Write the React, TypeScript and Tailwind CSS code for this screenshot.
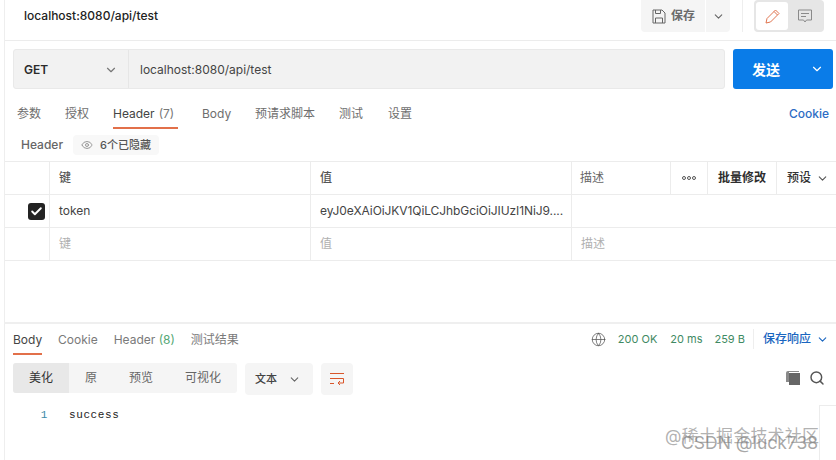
import { ChevronDown, Search, Globe, Eye, Check } from 'lucide-react'
import React from 'react'

const FONT = "font-['Inter','Noto_Sans_CJK_SC',sans-serif]"

const requestTabs = [
  { label: '参数', cls: 'w-[48px]' },
  { label: '授权', cls: 'w-[48px]' },
  { label: 'Header', count: '(7)', active: true, cls: 'w-[89px]' },
  { label: 'Body', cls: 'w-[53px]' },
  { label: '预请求脚本', cls: 'w-[84px]' },
  { label: '测试', cls: 'w-[49px]' },
  { label: '设置', cls: 'w-[48px]' },
]

const App: React.FC = () => {
  return (
    <div className={`${FONT} relative w-[836px] h-[460px] overflow-hidden bg-white text-[13px] text-[#3a3a3a]`}>
      <div className="ml-[4px] h-full border-l border-[#eeeeee] flex flex-col">
        {/* Title bar */}
        <div className="h-[41px] shrink-0 border-b border-[#ececec] flex items-center pl-[19px] pr-[12px]">
          <span className="text-[12px] font-medium text-[#222222] -mt-[9px]">localhost:8080/api/test</span>
          <div className="ml-auto flex items-start self-start h-[32px]">
            <div className="flex items-center gap-[5px] h-[32px] w-[64px] pl-[11px] bg-[#f5f5f5] rounded-bl-[4px] text-[#6b6b6b] font-semibold">
              <svg width="14" height="15" viewBox="0 0 14 15" fill="none" stroke="#666" strokeWidth="1">
                <path d="M1 1h9l3 3v10H1z" />
                <path d="M3.5 1v3.5h5V1M3.5 14V9h7v5" />
              </svg>
              <span className="text-[12px]">保存</span>
            </div>
            <div className="flex items-center justify-center ml-px h-[32px] w-[24px] bg-[#f5f5f5] rounded-br-[4px]">
              <ChevronDown size={13} color="#666" />
            </div>
            <div className="w-px h-[32px] bg-[#eeeeee] ml-[12px]" />
            <div className="ml-[11px] flex items-center h-[32px] w-[70px] bg-[#e6e6e6] rounded-[4px] p-[2px]">
              <div className="w-[32px] h-[28px] bg-white rounded-[3px] flex items-center justify-center">
                <svg width="15" height="15" viewBox="0 0 15 15" fill="none" stroke="#e0744f" strokeWidth="1">
                  <path d="M1 14l1-4.5L10.5 1 14 4.5 5.5 13z" />
                  <path d="M9 2.5L12.5 6" />
                </svg>
              </div>
              <div className="flex-1 flex items-center justify-center">
                <svg width="14" height="15" viewBox="0 0 14 15" fill="none" stroke="#8a8a8a" strokeWidth="1">
                  <path d="M.5 1h13v10H8.5L7 13 5.5 11H.5z" />
                  <path d="M3 4.5h8M3 7.5h5" />
                </svg>
              </div>
            </div>
          </div>
        </div>

        {/* URL bar */}
        <div className="flex h-[40px] mt-[8px] ml-[8px] mr-[2px] shrink-0 gap-[8px]">
          <div className="w-[712px] flex bg-[#f2f2f2] border border-[#e9e9e9] rounded-[3px]">
            <div className="w-[115px] flex items-center pl-[10px] pr-[10px] pt-px border-r border-[#e6e6e6]">
              <span className="text-[12px] font-semibold text-[#2b2b2b]">GET</span>
              <ChevronDown size={14} color="#777" className="ml-auto" />
            </div>
            <div className="flex items-center pl-[11px] pt-px text-[12px] text-[#444444]">localhost:8080/api/test</div>
          </div>
          <div className="w-[100px] flex items-center bg-[#0a7ce8] rounded-[3px] text-white">
            <span className="ml-[19px] text-[14px] font-bold">发送</span>
            <ChevronDown size={14} color="#fff" className="ml-auto mr-[9px]" />
          </div>
        </div>

        {/* Request tabs */}
        <div className="flex items-stretch h-[31px] mt-[9px] ml-[12px] shrink-0 text-[12px] text-[#6e6e6e]">
          {requestTabs.map((t) => (
            <div
              key={t.label}
              className={`${t.cls} flex pt-[7px] ${t.active ? 'text-[#444444]' : ''}`}
            >
              <span className={`h-full ${t.active ? 'border-b-2 border-[#e2704a] pr-[4px]' : ''}`}>
                {t.label}
                {t.count && <span className="text-[#777777] ml-[4px]">{t.count}</span>}
              </span>
            </div>
          ))}
          <span className="ml-auto mr-[7px] pt-[7px] text-[#2c6cc4] font-medium">Cookie</span>
        </div>

        {/* Header label */}
        <div className="flex items-center h-[32px] shrink-0 pl-[16px] text-[12px]">
          <span className="text-[#666666] font-medium">Header</span>
          <div className="ml-[10px] flex items-center gap-[7px] h-[20px] px-[8px] bg-[#f8f8f8] rounded-[4px] text-[#555555] text-[11px] font-medium">
            <Eye size={12} color="#9a9a9a" />
            <span>6个已隐藏</span>
          </div>
        </div>

        {/* Params table */}
        <div className="grid grid-cols-[45px_261px_261px_99px_37px_69px_1fr] grid-rows-[33px_33px_33px] shrink-0 border-t border-[#ececec] text-[12px]">
          <div className="border-r border-b border-[#ececec]" />
          <div className="border-r border-b border-[#ececec] flex items-center pl-[9px] text-[#555555] font-medium">键</div>
          <div className="border-r border-b border-[#ececec] flex items-center pl-[9px] text-[#555555] font-medium">值</div>
          <div className="border-r border-b border-[#ececec] flex items-center pl-[8px] text-[#666666]">描述</div>
          <div className="border-r border-b border-[#ececec] flex items-center justify-center gap-px">
            <span className="w-[4px] h-[4px] rounded-full border border-[#555555]" />
            <span className="w-[4px] h-[4px] rounded-full border border-[#555555]" />
            <span className="w-[4px] h-[4px] rounded-full border border-[#555555]" />
          </div>
          <div className="border-r border-b border-[#ececec] flex items-center justify-center text-[#2e2e2e] font-semibold">批量修改</div>
          <div className="border-b border-[#ececec] flex items-center pl-[10px] text-[#333333] font-medium">
            预设
            <ChevronDown size={13} color="#555" className="ml-[5px]" />
          </div>

          <div className="border-r border-b border-[#ececec] flex items-center justify-end pr-[4px]">
            <span className="w-[17px] h-[17px] rounded-[3px] bg-[#232323] flex items-center justify-center">
              <Check size={13} color="#fff" strokeWidth={3.5} />
            </span>
          </div>
          <div className="border-r border-b border-[#ececec] flex items-center pl-[9px] text-[#444444]">token</div>
          <div className="border-r border-b border-[#ececec] flex items-center pl-[9px] text-[#444444] tracking-[-0.08px] whitespace-nowrap overflow-hidden">eyJ0eXAiOiJKV1QiLCJhbGciOiJIUzI1NiJ9....</div>
          <div className="col-span-4 border-b border-[#ececec]" />

          <div className="border-r border-b border-[#ececec]" />
          <div className="border-r border-b border-[#ececec] flex items-center pl-[9px] text-[#b0b0b0]">键</div>
          <div className="border-r border-b border-[#ececec] flex items-center pl-[9px] text-[#b0b0b0]">值</div>
          <div className="col-span-4 border-b border-[#ececec] flex items-center pl-[9px] text-[#b0b0b0]">描述</div>
        </div>

        {/* Response */}
        <div className="mt-[61px] border-t-2 border-[#efefef] flex-1 flex flex-col -ml-px">
          <div className="flex items-stretch h-[31px] shrink-0 pl-[9px] pr-[7px] text-[12px] text-[#7a7a7a]">
            <span className="pt-[7px] w-[29px] h-full border-b-2 border-[#e2704a] text-[#444444]">Body</span>
            <span className="pt-[7px] ml-[16px]">Cookie</span>
            <span className="pt-[7px] ml-[16px]">
              Header <span className="text-[#55a876]">(8)</span>
            </span>
            <span className="pt-[7px] ml-[16px]">测试结果</span>
            <div className="ml-auto flex items-center -mt-[1px] text-[11px] text-[#3f8a63]">
              <Globe size={15} color="#555" strokeWidth={1.2} />
              <span className="ml-[12px]">200 OK</span>
              <span className="ml-[13px]">20 ms</span>
              <span className="ml-[12px]">259 B</span>
              <div className="ml-[8px] mr-[9px] w-px h-[20px] bg-[#eeeeee]" />
              <span className="text-[12px] font-medium text-[#1a66c0]">保存响应</span>
              <ChevronDown size={13} color="#1a66c0" className="ml-[5px]" />
            </div>
          </div>

          <div className="flex items-start h-[32px] mt-[8px] ml-[9px] pr-[11px] shrink-0 text-[12px]">
            <div className="flex w-[224px] h-[30px] bg-[#f5f5f5] rounded-[3px] text-[#666666]">
              <span className="w-[56px] flex items-center justify-center bg-[#e8e8e8] rounded-l-[3px] text-[#333333]">美化</span>
              <span className="w-[44px] flex items-center justify-center">原</span>
              <span className="w-[56px] flex items-center justify-center">预览</span>
              <span className="w-[68px] flex items-center justify-center">可视化</span>
            </div>
            <div className="ml-[8px] w-[68px] h-[32px] pl-[10px] bg-[#f5f5f5] rounded-[4px] flex items-center text-[11px] font-medium text-[#444444]">
              文本
              <ChevronDown size={13} color="#666" className="ml-[11px]" />
            </div>
            <div className="ml-[8px] w-[32px] h-[32px] bg-[#f5f5f5] rounded-[4px] flex items-center justify-center">
              <svg width="16" height="14" viewBox="0 0 16 14" fill="none" stroke="#d9562b" strokeWidth="1">
                <path d="M1 1.5h14M1 6.5h13.5v4.5h-5M1 11.5h4M11 9l-2 2 2 2" />
              </svg>
            </div>
            <div className="ml-auto flex items-start gap-[9px] pt-[7px]">
              <svg width="15" height="15" viewBox="0 0 15 15">
                <path d="M3 1h11v1H4v10H1V3a2 2 0 0 1 2-2z" fill="#8a8a8a" />
                <rect x="4" y="3" width="11" height="12" fill="#666" />
              </svg>
              <Search size={16} color="#555" strokeWidth={2.2} />
            </div>
          </div>

          <div className="flex-1 flex mt-[10px] pt-px text-[11px] tracking-[0.6px] font-['Liberation_Mono',monospace]">
            <span className="w-[44px] text-right text-[#3a8aa8] leading-[18px]">1</span>
            <span className="ml-[21px] text-[#222222] leading-[18px]">success</span>
            <div className="ml-auto w-[17px] -mt-px border-l border-t border-[#ececec]" />
          </div>
        </div>
      </div>

      {/* Watermarks */}
      <span className="absolute left-[665px] top-[426px] text-[17px] leading-[20px] tracking-[0.2px] text-[#8f8f8f]/70 whitespace-nowrap">
        @稀土掘金技术社区
      </span>
      <span className="absolute left-[681px] top-[433px] text-[17.5px] leading-[20px] text-[#7f7f7f]/70 whitespace-nowrap">
        CSDN @luck738
      </span>
    </div>
  )
}

export default App
